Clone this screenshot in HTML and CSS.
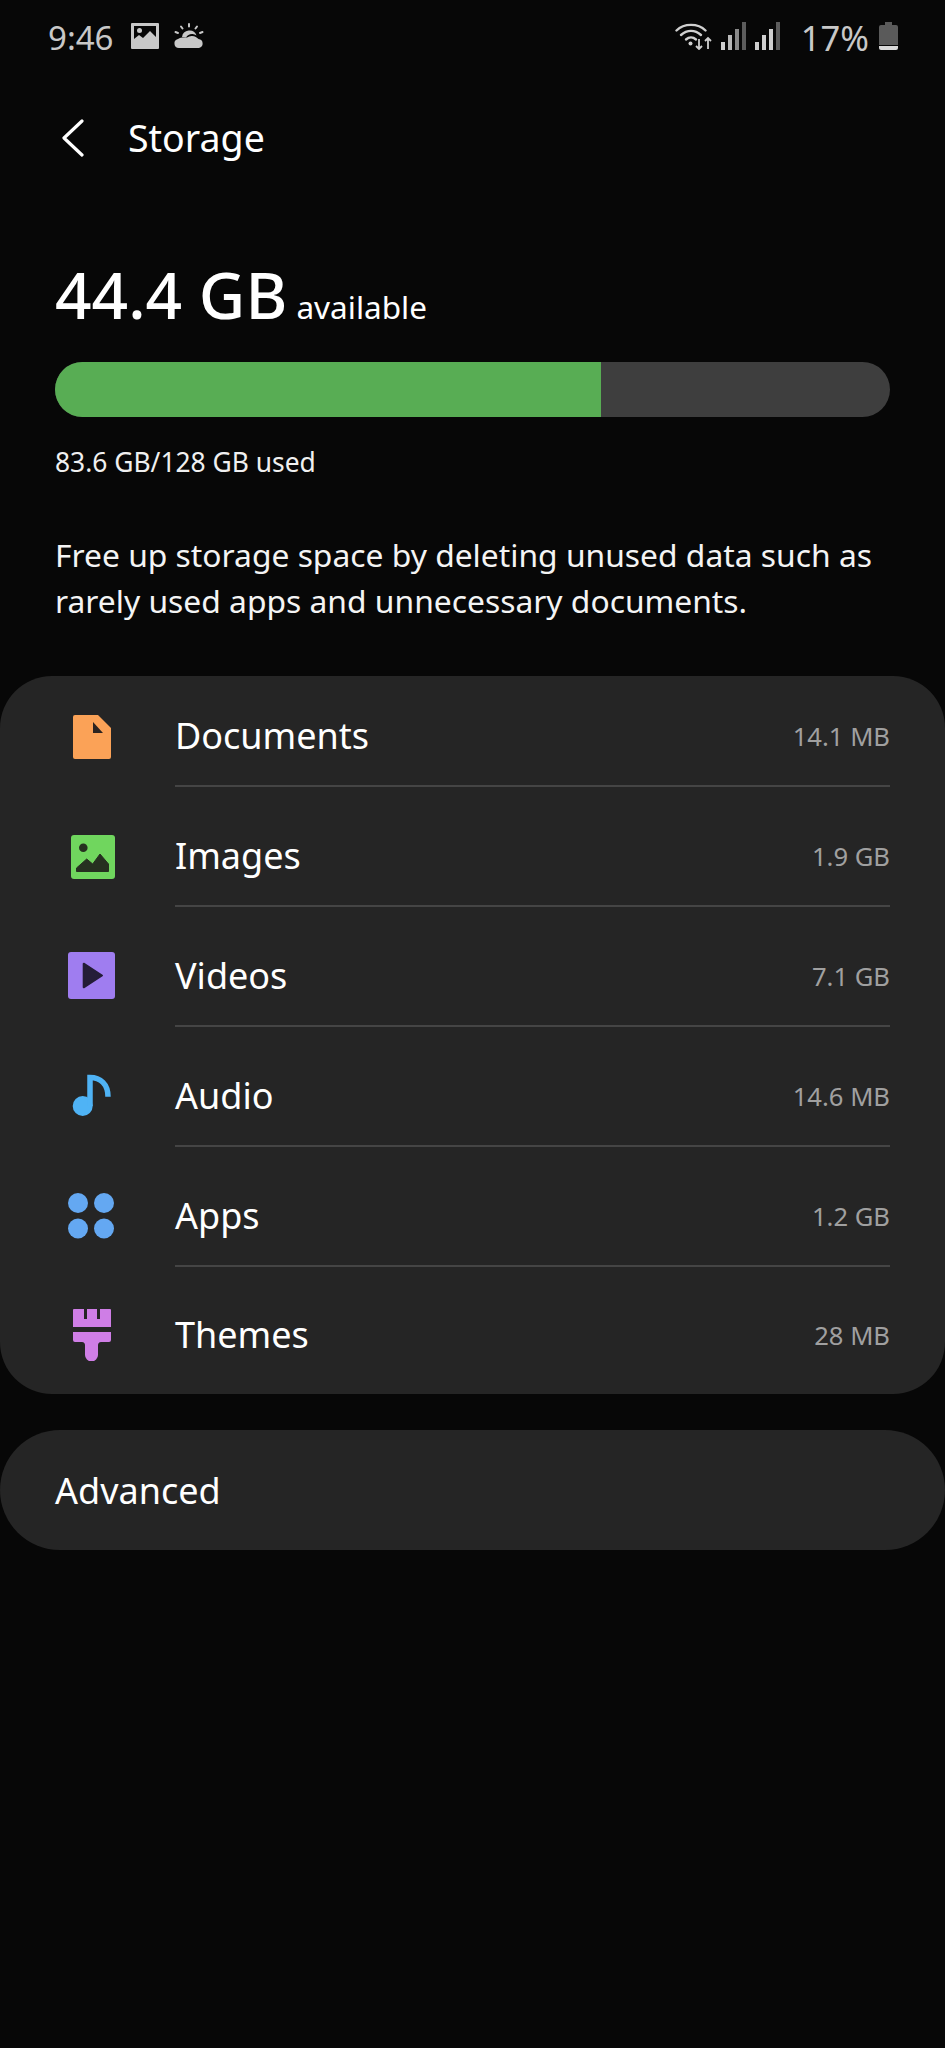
FILE: index.html
```html
<!DOCTYPE html>
<html lang="en">
<head>
<meta charset="utf-8">
<title>Storage</title>
<link rel="stylesheet" href="styles.css">
</head>
<body>
<div class="status">
  <div class="status-left">
    <span class="time">9:46</span>
    <svg class="st-img" viewBox="0 0 28 26"><path fill="#c8c8c8" fill-rule="evenodd" d="M1 0h26a1 1 0 0 1 1 1v24a1 1 0 0 1-1 1H1a1 1 0 0 1-1-1V1a1 1 0 0 1 1-1zM3 3v13l5-4 4 3 7-7 6 6V3z"/><circle cx="8.500" cy="7.500" r="2.500" fill="#c8c8c8"/></svg>
    <svg class="st-sun" viewBox="0 0 30 26"><path fill="#c8c8c8" d="M8 14a7.500 7.500 0 0 1 14.500-1.500A6 6 0 0 0 18 11a7 7 0 0 0-6 3.500z"/><path fill="#c8c8c8" d="M5 25a4.500 4.500 0 0 1-1-8.900A6 6 0 0 1 9 14.500h4a8 8 0 0 1 5-1.500c3 0 5 1.500 6.500 3.100A4.500 4.500 0 0 1 25 25z"/><g stroke="#c8c8c8" stroke-width="2" stroke-linecap="round"><path d="M15 1v2.500M7 3.500l1.500 2M23 3.500l-1.500 2M1.500 9l2.500 1M28.500 9l-2.500 1"/></g></svg>
  </div>
  <div class="status-right">
    <svg class="st-wifi" viewBox="0 0 37 28"><g fill="none" stroke="#d0d0d0" stroke-width="2.400" stroke-linecap="round"><path d="M1.500 8.500C9 1 23 1 30.500 8.500"/><path d="M6 13c6-5.500 14-5.500 20 0"/><path d="M11 17.500c3-2.600 7-2.600 10 0"/></g><circle cx="15.500" cy="21.500" r="2" fill="#d0d0d0"/><path fill="none" stroke="#d0d0d0" stroke-width="1.800" d="M24 17v10M21 24l3 3 3-3M33 27V16M30 19l3-3 3 3"/></svg>
    <svg class="st-sig" viewBox="0 0 25 28"><rect x="0" y="20" width="4" height="8" fill="#cfcfcf"/><rect x="7" y="13" width="4" height="15" fill="#b8b8b8"/><rect x="14" y="7" width="4" height="21" fill="#8a8a8a"/><rect x="21" y="0" width="4" height="28" fill="#5c5c5c"/></svg>
    <svg class="st-sig" viewBox="0 0 25 28"><rect x="0" y="20" width="4" height="8" fill="#cfcfcf"/><rect x="7" y="13" width="4" height="15" fill="#cfcfcf"/><rect x="14" y="7" width="4" height="21" fill="#cfcfcf"/><rect x="21" y="0" width="4" height="28" fill="#5c5c5c"/></svg>
    <span class="pct">17%</span>
    <svg class="st-bat" viewBox="0 0 19 28"><path fill="#5a5a5a" d="M6 0h7v3h4a2 2 0 0 1 2 2v18H0V5a2 2 0 0 1 2-2h4z"/><path fill="#d8d8d8" d="M0 24h19v2a2 2 0 0 1-2 2H2a2 2 0 0 1-2-2z"/></svg>
  </div>
</div>

<header class="appbar">
  <svg class="back" viewBox="0 0 24 38"><path d="M21 2 3 19l18 17" fill="none" stroke="#fff" stroke-width="3.200" stroke-linecap="round" stroke-linejoin="round"/></svg>
  <h1 class="title">Storage</h1>
</header>

<section class="summary">
  <div class="avail"><span class="big">44.4 GB</span> <span class="avail-label">available</span></div>
  <div class="bar"><div class="bar-fill" style="width:65.4%"></div></div>
  <p class="used">83.6 GB/128 GB used</p>
  <p class="desc">Free up storage space by deleting unused data such as rarely used apps and unnecessary documents.</p>
</section>

<section class="card">
  <div class="row">
    <svg class="icon" viewBox="0 0 48 52"><path fill="#fba257" d="M8 5h23l13 13v29a2 2 0 0 1-2 2H8a2 2 0 0 1-2-2V7a2 2 0 0 1 2-2z"/><path fill="#2b2320" d="M26 12l10 11H26z"/></svg>
    <div class="row-body"><span class="name">Documents</span><span class="size">14.1 MB</span></div>
  </div>
  <div class="row">
    <svg class="icon" viewBox="0 0 48 52"><rect x="4" y="5" width="44" height="44" rx="3" fill="#70d65e"/><circle cx="16.300" cy="17.700" r="4.300" fill="#263020"/><path fill="#263020" stroke="#263020" stroke-linejoin="round" d="M9.500 41.500V38l10.200-9 6 5 7.300-10 8.500 10v7.500z"/></svg>
    <div class="row-body"><span class="name">Images</span><span class="size">1.9 GB</span></div>
  </div>
  <div class="row">
    <svg class="icon" viewBox="0 0 48 52"><rect x="1" y="2" width="47" height="47" rx="3" fill="#9f7df0"/><path fill="#241d38" stroke="#241d38" stroke-width="2" stroke-linejoin="round" d="M16.700 13.700v23.600L35 25.500z"/></svg>
    <div class="row-body"><span class="name">Videos</span><span class="size">7.1 GB</span></div>
  </div>
  <div class="row">
    <svg class="icon" viewBox="0 0 48 52"><circle cx="15.700" cy="36" r="10" fill="#4fb3f5"/><path fill="none" stroke="#4fb3f5" stroke-width="5.500" d="M23 36V7.500C33.500 7.500 41 14 41 26.700"/></svg>
    <div class="row-body"><span class="name">Audio</span><span class="size">14.6 MB</span></div>
  </div>
  <div class="row">
    <svg class="icon" viewBox="0 0 48 52"><g fill="#64a8f2"><circle cx="11" cy="13" r="10"/><circle cx="37" cy="13" r="10"/><circle cx="11" cy="38.500" r="10"/><circle cx="37" cy="38.500" r="10"/></g></svg>
    <div class="row-body"><span class="name">Apps</span><span class="size">1.2 GB</span></div>
  </div>
  <div class="row">
    <svg class="icon" viewBox="0 0 48 52"><path fill="#cf7ee6" d="M7 0h10v10h3V0h10v10h3V0h10a1 1 0 0 1 1 1v17H6V1a1 1 0 0 1 1-1z"/><path fill="#cf7ee6" d="M6 23h38v8a2 2 0 0 1-2 2h-8c-2 0-3 1.500-3 3v10a6.500 6.500 0 0 1-13 0V36c0-1.500-1-3-3-3H8a2 2 0 0 1-2-2z"/></svg>
    <div class="row-body"><span class="name">Themes</span><span class="size">28 MB</span></div>
  </div>
</section>

<section class="card card-adv">
  <span class="name">Advanced</span>
</section>
</body>
</html>
```

FILE: styles.css
```css
* { box-sizing: border-box; }
html, body { margin: 0; padding: 0; }
body {
  background: #070707;
  color: #fff;
  font-family: "Noto Sans", "Open Sans", sans-serif;
  width: 945px;
  height: 2048px;
  overflow: hidden;
}
.status {
  height: 72px;
  padding: 0 47px 0 48px;
  display: flex;
  align-items: center;
  justify-content: space-between;
  color: #c8c8c8;
}
.status-left, .status-right { display: flex; align-items: center; }
.time, .pct { line-height: 40px; padding-top: 3px; }
.time { font-size: 33px; }
.pct { font-size: 34.5px; margin-left: 21px; }
.st-img { width: 28px; height: 26px; margin-left: 18px; }
.st-sun { width: 30px; height: 26px; margin-left: 15px; }
.st-wifi { width: 37px; height: 28px; }
.st-sig { width: 25px; height: 28px; margin-left: 9px; }
.st-bat { width: 19px; height: 28px; margin-left: 10px; }

.appbar {
  height: 74px;
  margin-top: 29px;
  padding-left: 61px;
  display: flex;
  align-items: center;
}
.back { width: 24px; height: 38px; }
.title { margin: 0 0 0 43px; font-size: 37.5px; font-weight: 400; line-height: 50px; }

.summary { padding: 0 55px; }
.avail { margin-top: 89px; height: 62px; line-height: 62px; white-space: nowrap; }
.big { font-size: 64px; font-weight: 500; }
.avail-label { font-size: 31.5px; margin-left: 5px; }
.bar { margin-top: 36px; height: 55px; border-radius: 28px; background: #3e3e3e; overflow: hidden; }
.bar-fill { height: 100%; background: #58ad54; }
.used { margin: 27px 0 0; font-size: 26.4px; line-height: 36px; color: #f0f0f0; }
.desc { margin: 52px 0 0; font-size: 31.8px; line-height: 46px; color: #f4f4f4; }

.card { margin-top: 52px; background: #252525; border-radius: 52px; }
.row { height: 120px; display: flex; align-items: flex-end; }
.row:first-child { height: 111px; }
.row:last-child { height: 127px; }
.icon { width: 48px; height: 52px; margin: 0 0 25px 67px; flex: none; }
.row-body {
  margin-left: 60px;
  margin-right: 55px;
  padding-bottom: 24px;
  flex: 1;
  display: flex;
  align-items: center;
  justify-content: space-between;
  border-bottom: 2px solid #454545;
}
.row:last-child .icon { margin-bottom: 33px; }
.row:last-child .row-body { border-bottom: none; padding-bottom: 34px; }
.name { font-size: 36px; line-height: 50px; }
.size { font-size: 25.6px; color: #a0a0a0; }
.card-adv { margin-top: 36px; height: 120px; display: flex; align-items: center; padding: 2px 0 0 55px; border-radius: 60px; }
```
